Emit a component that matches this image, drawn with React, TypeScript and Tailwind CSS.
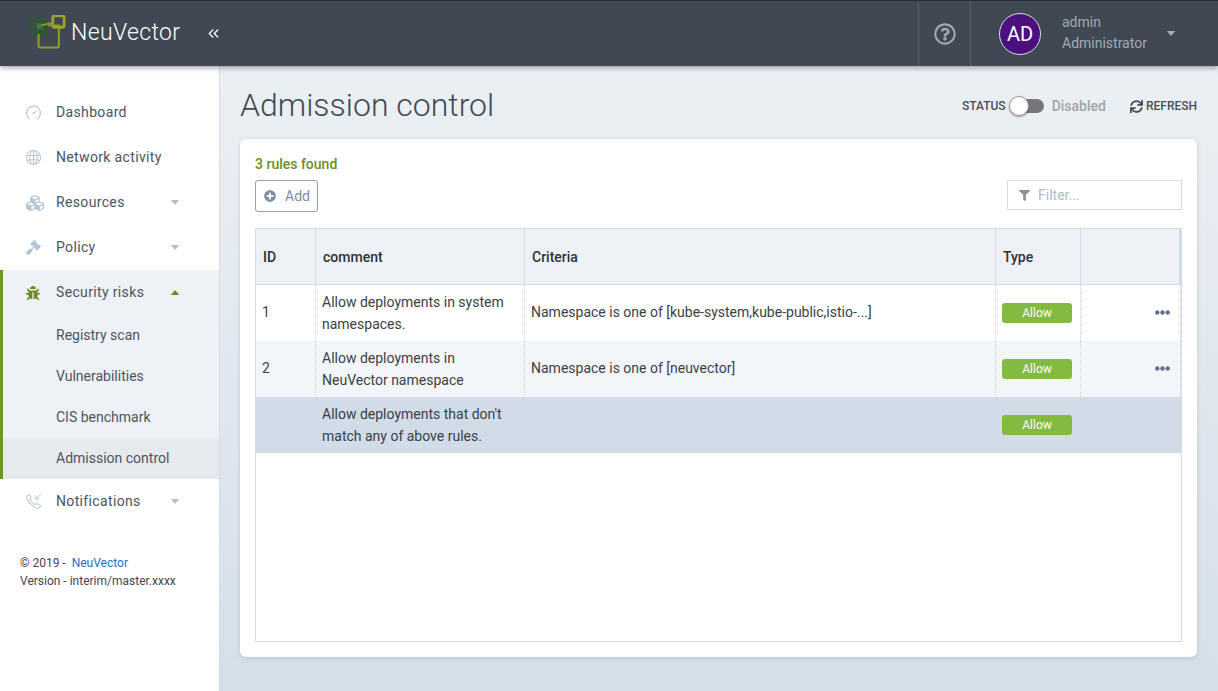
import { ChevronsLeft } from 'lucide-react';
import { FaBug, FaCubes, FaFilter, FaGavel, FaPlusCircle, FaRegQuestionCircle, FaSync } from 'react-icons/fa';
import { SlCallIn, SlGlobe, SlSpeedometer } from 'react-icons/sl';
import type { ReactNode } from 'react';

function Caret({ up, className }: { up?: boolean; className: string }) {
  return (
    <svg viewBox="0 0 10 6" className={`w-[10px] h-[5px] ${className}`}>
      <path d={up ? 'M0 6 L5 0 L10 6 Z' : 'M0 0 L5 6 L10 0 Z'} fill="currentColor" />
    </svg>
  );
}

function Logo() {
  return (
    <svg viewBox="0 0 40 36" className="w-[38px] h-[34px] shrink-0 mb-[3px]">
      <rect x="1" y="5" width="16" height="16" fill="#2f5a2c" fillOpacity="0.45" stroke="#2f5a2c" strokeWidth="2" />
      <circle cx="10" cy="12" r="3.4" fill="#3a7a35" />
      <path d="M8 18 L11 21 L17 13" stroke="#2f5a2c" strokeWidth="2" fill="none" />
      <rect x="24" y="1" width="12" height="12" rx="1.5" fill="none" stroke="#9aa52b" strokeWidth="3" />
      <path d="M12 11 L24 8 M19 11 L32 11" stroke="#8f9c2a" strokeWidth="2" fill="none" />
      <path d="M9 20 V33 a1.5 1.5 0 0 0 1.5 1.5 H29 a1.5 1.5 0 0 0 1.5 -1.5 V13" stroke="#8f9c2a" strokeWidth="2.2" fill="none" />
    </svg>
  );
}

function Dots() {
  return (
    <svg viewBox="0 0 15 5" className="w-[15px] h-[5px] mb-[2px] text-[#64708a]">
      <circle cx="2.3" cy="2.5" r="2.2" fill="currentColor" />
      <circle cx="7.5" cy="2.5" r="2.2" fill="currentColor" />
      <circle cx="12.7" cy="2.5" r="2.2" fill="currentColor" />
    </svg>
  );
}

function NavItem({ icon, label, caret, active }: { icon: ReactNode; label: string; caret?: boolean; active?: boolean }) {
  return (
    <div className="h-[45px] flex items-center pl-[26px] pr-[39px]">
      <span className={`w-[30px] shrink-0 ${active ? 'text-[#6b8e23]' : 'text-[#b3c5d6]'}`}>{icon}</span>
      <span className="flex-1 text-[14px] tracking-[0.35px] text-[#4a5563]">{label}</span>
      {caret && <Caret up={active} className={active ? 'text-[#6b8e23]' : 'text-[#aebfd0]'} />}
    </div>
  );
}

function SubItem({ label, selected }: { label: string; selected?: boolean }) {
  return (
    <div className={`h-[41px] flex items-center pl-[53px] text-[14px] text-[#4a5563] ${selected ? 'bg-[#e6eaef]' : ''}`}>
      {label}
    </div>
  );
}

function Sidebar() {
  return (
    <aside className="w-[220px] shrink-0 bg-white border-r border-[#d5dce4] pt-[24px]">
      <NavItem icon={<SlSpeedometer size={15} />} label="Dashboard" />
      <NavItem icon={<SlGlobe size={15} />} label="Network activity" />
      <NavItem icon={<FaCubes size={18} className="-ml-[0.5px]" />} label="Resources" caret />
      <NavItem icon={<FaGavel size={15} />} label="Policy" caret />
      <div className="bg-[#eef1f6] border-l-[3px] border-[#6f9428]">
        <div className="-ml-[3px]">
          <NavItem icon={<FaBug size={14} />} label="Security risks" caret active />
        </div>
        <div className="-ml-[3px] pl-[3px]">
          <SubItem label="Registry scan" />
          <SubItem label="Vulnerabilities" />
          <SubItem label="CIS benchmark" />
          <SubItem label="Admission control" selected />
        </div>
      </div>
      <NavItem icon={<SlCallIn size={15} />} label="Notifications" caret />
      <div className="pl-[20px] pt-[30px] text-[12px] leading-[18px] text-[#3f4650]">
        <div>
          © 2019 - <span className="ml-[3px] text-[#1d6fd1]">NeuVector</span>
        </div>
        <div>Version - interim/master.xxxx</div>
      </div>
    </aside>
  );
}

function Header() {
  return (
    <header className="relative z-10 h-[66px] shrink-0 bg-[#3f4853] border-t border-[#2a2d31] shadow-[0_2px_5px_rgba(0,0,0,0.35)] flex items-center">
      <div className="pl-[30px] flex items-center w-[918px]">
        <Logo />
        <span className="ml-[3px] mb-[1px] text-[23px] font-light tracking-[0.35px] text-white">NeuVector</span>
        <ChevronsLeft size={17} className="ml-[25px] mb-[1px] text-white" strokeWidth={1.8} />
      </div>
      <div className="h-full w-[53px] border-l border-r border-[#565f6a] flex items-center justify-center">
        <FaRegQuestionCircle size={22} className="text-[#a3a8ae]" />
      </div>
      <div className="pl-[28px] flex items-center">
        <div className="w-[42px] h-[42px] rounded-full bg-[#4b0f7e] border border-[#d8d8e0] flex items-center justify-center text-white text-[20px]">
          AD
        </div>
        <div className="ml-[21px] mb-[2px] w-[104px] text-[14px] leading-[21px] text-[#a3a9b0]">
          <div>admin</div>
          <div>Administrator</div>
        </div>
        <Caret className="text-[#a9aeb4]" />
      </div>
    </header>
  );
}

function AllowBadge() {
  return (
    <span className="block w-[70px] h-[20px] leading-[20px] rounded-[3px] bg-[#82bb40] text-center text-[12px] text-white">
      Allow
    </span>
  );
}

const cols = 'grid grid-cols-[60px_209px_471px_85px_1fr]';
const cellDots = 'border-r border-dotted border-[#c5d3e4]';

function Row({ id, comment, criteria, shaded }: { id: string; comment: string; criteria: string; shaded?: boolean }) {
  return (
    <div className={`${cols} h-[56px] text-[14px] text-[#3a3f46] ${shaded ? 'bg-[#f3f6f8]' : 'bg-white'}`}>
      <div className={`${cellDots} flex items-center pl-[6px] pb-[2px]`}>{id}</div>
      <div className={`${cellDots} flex items-center pl-[6px] pr-[8px] leading-[22px]`}>{comment}</div>
      <div className={`${cellDots} flex items-center pl-[6px] pb-[2px]`}>{criteria}</div>
      <div className={`${cellDots} flex items-center pl-[6px]`}>
        <AllowBadge />
      </div>
      <div className={`${cellDots} flex items-center justify-end pr-[10px]`}>
        <Dots />
      </div>
    </div>
  );
}

function RulesTable() {
  return (
    <div className="mt-[16px] h-[414px] border border-[#cfdbe8]">
      <div className={`${cols} h-[56px] bg-[#eef1f6] border-b border-[#cfdbe8] text-[14px] font-medium text-[#2e3238]`}>
        <div className="border-r border-[#cfdbe8] flex items-center pl-[7px] pt-[1px]">ID</div>
        <div className="border-r border-[#cfdbe8] flex items-center pl-[7px] pt-[1px]">comment</div>
        <div className="border-r border-[#cfdbe8] flex items-center pl-[7px] pt-[1px]">Criteria</div>
        <div className="border-r border-[#cfdbe8] flex items-center pl-[7px] pt-[1px]">Type</div>
        <div className="border-r-2 border-[#cfdbe8]" />
      </div>
      <Row id="1" comment="Allow deployments in system namespaces." criteria="Namespace is one of [kube-system,kube-public,istio-...]" />
      <Row id="2" comment="Allow deployments in NeuVector namespace" criteria="Namespace is one of [neuvector]" shaded />
      <div className={`${cols} h-[56px] bg-[#d1dce8] text-[14px] text-[#3a3f46]`}>
        <div />
        <div className="flex items-center pl-[6px] pr-[8px] leading-[22px]">Allow deployments that don't match any of above rules.</div>
        <div />
        <div className="flex items-center pl-[6px]">
          <AllowBadge />
        </div>
        <div />
      </div>
    </div>
  );
}

export default function App() {
  return (
    <div className="w-[1218px] h-[691px] overflow-hidden flex flex-col font-['Roboto',sans-serif]">
      <Header />
      <div className="flex-1 flex min-h-0">
        <Sidebar />
        <main className="flex-1 min-w-0 bg-gradient-to-b from-[#ebf0f4] to-[#d5dfe9] pl-[20px] pr-[21px]">
          <div className="h-[73px] flex items-center pt-[5px]">
            <h1 className="flex-1 text-[32px] font-light text-[#414a55]">Admission control</h1>
            <div className="flex items-center mt-[2px]">
              <span className="text-[12px] font-medium text-[#4a4f57]">STATUS</span>
              <div className="relative ml-[4px] w-[34px] h-[14px] rounded-full bg-[#77777a]">
                <div className="absolute -left-[1px] -top-[3px] w-[20px] h-[20px] rounded-full bg-white border border-[#9a9a9a] shadow-[0_1px_2px_rgba(0,0,0,0.4)]" />
              </div>
              <span className="ml-[8px] text-[14px] font-medium text-[#a0a4aa]">Disabled</span>
              <FaSync size={13} className="ml-[24px] text-[#4a4f57]" />
              <span className="ml-[3px] text-[12px] font-medium text-[#4a4f57]">REFRESH</span>
            </div>
          </div>
          <section className="h-[518px] rounded-[6px] bg-white shadow-[0_1px_4px_rgba(120,140,165,0.35)] px-[15px] pt-[17px]">
            <div className="text-[14px] leading-[16px] font-medium text-[#6b8e23]">3 rules found</div>
            <div className="mt-[8px] flex items-start justify-between">
              <button className="w-[63px] h-[32px] rounded-[3px] border border-[#8fa1b3] flex items-center pl-[8px] text-[14px] text-[#7d8ca3]">
                <FaPlusCircle size={12} />
                <span className="ml-[9px]">Add</span>
              </button>
              <div className="w-[175px] h-[30px] border border-[#cfdbe8] flex items-center pl-[11px] text-[14px] text-[#b4bac6]">
                <FaFilter size={11} className="text-[#8d9299]" />
                <span className="ml-[8px]">Filter...</span>
              </div>
            </div>
            <RulesTable />
          </section>
        </main>
      </div>
    </div>
  );
}
